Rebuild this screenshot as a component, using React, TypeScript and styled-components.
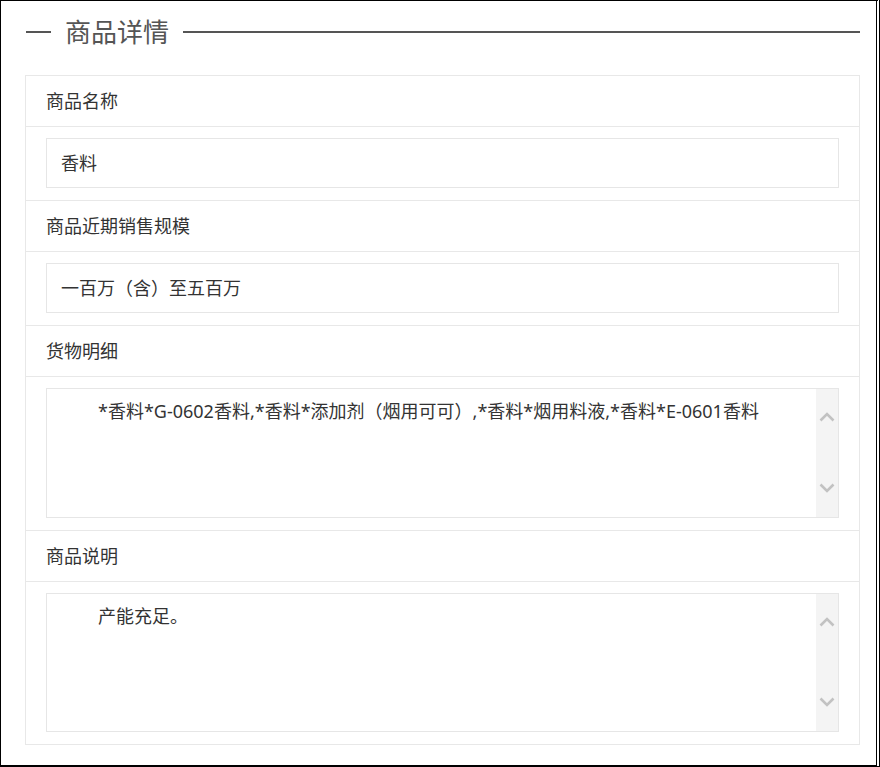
import React from 'react';
import styled, { createGlobalStyle } from 'styled-components';

const GlobalStyle = createGlobalStyle`
    body {
        margin: 0;
        background: #fff;
        font-family: "Noto Sans", "Noto Sans CJK SC", sans-serif;
        color: #333;
    }
`;

type Field = {
    label: string;
    value: string;
    multiline?: boolean;
    height?: number;
};

const fields: Field[] = [
    { label: '商品名称', value: '香料' },
    { label: '商品近期销售规模', value: '一百万（含）至五百万' },
    {
        label: '货物明细',
        value: '*香料*G-0602香料,*香料*添加剂（烟用可可）,*香料*烟用料液,*香料*E-0601香料',
        multiline: true,
        height: 130,
    },
    { label: '商品说明', value: '产能充足。', multiline: true, height: 139 },
];

const Chevron: React.FC<{ up?: boolean }> = ({ up }) => (
    <svg width="16" height="10" viewBox="0 0 16 10">
        <path
            d={up ? 'M1.5 8.5 L8 2 L14.5 8.5' : 'M1.5 1.5 L8 8 L14.5 1.5'}
            fill="none"
            stroke="#c2c2c2"
            strokeWidth="2.6"
        />
    </svg>
);

export default function App() {
    return (
        <Frame>
            <GlobalStyle />
            <Heading>
                <Dash />
                <Title>商品详情</Title>
                <Rule />
            </Heading>
            <Card>
                {fields.map((f, i) => (
                    <React.Fragment key={f.label}>
                        <LabelRow>{f.label}</LabelRow>
                        <FieldRow $last={i === fields.length - 1}>
                            {f.multiline ? (
                                <TextBox style={{ height: f.height }}>
                                    <TextBody>{f.value}</TextBody>
                                    <ScrollTrack>
                                        <Chevron up />
                                        <Chevron />
                                    </ScrollTrack>
                                </TextBox>
                            ) : (
                                <InputBox>{f.value}</InputBox>
                            )}
                        </FieldRow>
                    </React.Fragment>
                ))}
            </Card>
        </Frame>
    );
}

const Frame = styled.div`
    box-sizing: border-box;
    width: 880px;
    height: 767px;
    border-left: 1px solid #000;
    border-top: 1px solid #000;
    border-right: 4px double #000;
    border-bottom: 2px solid #000;
    padding: 13px 16px 0 24px;
`;

const Heading = styled.div`
    display: flex;
    align-items: center;
    height: 36px;
    margin-left: 1px;
    gap: 14px;
`;

const Dash = styled.span`
    width: 25px;
    height: 2px;
    background: #555;
`;

const Title = styled.h1`
    margin: 0;
    font-size: 26px;
    font-weight: 400;
    color: #555;
    line-height: 36px;
    white-space: nowrap;
`;

const Rule = styled.span`
    flex: 1;
    height: 2px;
    background: #555;
`;

const Card = styled.div`
    margin-top: 25px;
    width: 835px;
    box-sizing: border-box;
    border: 1px solid #e8e8e8;
`;

const LabelRow = styled.div`
    height: 50px;
    line-height: 50px;
    padding: 0 20px;
    font-size: 18px;
    color: #333;
    border-bottom: 1px solid #e8e8e8;
`;

const FieldRow = styled.div<{ $last?: boolean }>`
    padding: 11px 20px 12px;
    border-bottom: ${p => (p.$last ? 'none' : '1px solid #e8e8e8')};
`;

const InputBox = styled.div`
    box-sizing: border-box;
    height: 50px;
    line-height: 48px;
    padding: 0 14px;
    border: 1px solid #e6e6e6;
    font-size: 18px;
    color: #333;
`;

const TextBox = styled.div`
    box-sizing: border-box;
    display: flex;
    border: 1px solid #e6e6e6;
`;

const TextBody = styled.div`
    flex: 1;
    padding: 9px 15px;
    text-indent: 36px;
    font-size: 18px;
    line-height: 26px;
    color: #333;
    white-space: nowrap;
`;

const ScrollTrack = styled.div`
    width: 22px;
    background: #f4f4f4;
    display: flex;
    flex-direction: column;
    align-items: center;
    justify-content: space-between;
    padding: 23px 0 24px;
`;
